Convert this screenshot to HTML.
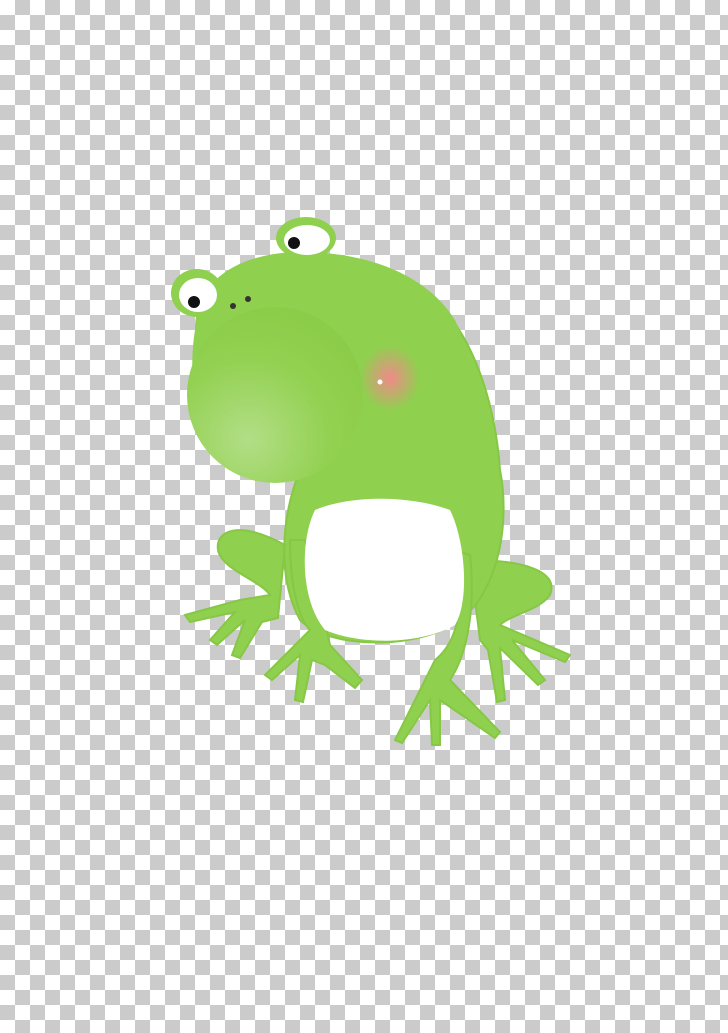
<!DOCTYPE html>
<html><head><style>
html,body{margin:0;padding:0}
body{width:728px;height:1033px;overflow:hidden;
background:conic-gradient(#cbcbcb 25%,#fff 0 50%,#cbcbcb 0 75%,#fff 0);
background-size:30px 30px;}
svg{position:absolute;left:0;top:0}
</style></head><body>
<svg width="728" height="1033" viewBox="0 0 728 1033">
<defs>
<radialGradient id="hg" cx="0.35" cy="0.75" r="0.75"><stop offset="0" stop-color="#b2de86"/><stop offset="0.6" stop-color="#93d152"/><stop offset="1" stop-color="#8bcc48"/></radialGradient>
<radialGradient id="cg" cx="0.5" cy="0.5" r="0.5"><stop offset="0" stop-color="#f08a8a"/><stop offset="1" stop-color="#f08a8a" stop-opacity="0"/></radialGradient>
</defs>
<g fill="#8fd04e" stroke="#86c845" stroke-width="2">
<path d="M285 545 C240 520 215 530 218 550 C222 570 260 580 270 595 L240 600 L185 615 L190 622 L235 612 L210 640 L217 645 L245 620 L232 655 L240 658 L262 622 L278 618 Z"/>
<path d="M470 560 C520 560 560 570 550 595 C540 610 510 615 500 625 L570 655 L565 662 L512 640 L545 680 L538 685 L500 648 L505 700 L497 702 L488 650 L480 640 Z"/>
<path d="M300 470 C280 520 278 580 300 620 C330 650 420 650 460 620 C500 590 510 520 500 470 C495 400 470 320 420 290 L330 300 Z"/>
<path d="M290 540 C290 590 300 620 310 630 L265 675 L272 680 L300 655 L295 700 L303 702 L312 660 L325 665 L355 688 L362 680 L330 645 C320 600 310 560 305 540 Z"/>
<path d="M455 550 C465 600 460 640 435 660 L395 740 L402 743 L430 700 L432 745 L440 745 L440 700 L495 738 L500 732 L450 680 C470 650 475 600 470 555 Z"/>
</g>
<path d="M315 510 C300 540 300 600 325 630 C360 645 420 645 455 625 C470 600 465 540 450 510 C410 495 350 495 315 510 Z" fill="#fff"/>
<path d="M195 330 C195 280 240 250 310 252 C380 255 430 280 455 320 C475 360 470 430 430 470 C380 500 330 490 310 480 C270 485 220 470 200 420 C192 400 190 360 195 330 Z" fill="#8fd04e"/>
<ellipse cx="275" cy="395" rx="88" ry="88" fill="url(#hg)"/>
<ellipse cx="197" cy="293" rx="26" ry="24" fill="#8fd04e"/>
<ellipse cx="198" cy="295" rx="19" ry="17" fill="#fff"/>
<circle cx="194" cy="302" r="6" fill="#111"/>
<ellipse cx="306" cy="238" rx="30" ry="21" fill="#8fd04e"/>
<ellipse cx="307" cy="240" rx="23" ry="15" fill="#fff"/>
<circle cx="294" cy="243" r="6" fill="#111"/>
<circle cx="233" cy="306" r="3" fill="#333"/><circle cx="248" cy="299" r="3" fill="#333"/>
<ellipse cx="390" cy="378" rx="30" ry="33" fill="url(#cg)"/>
<circle cx="380" cy="382" r="2.5" fill="#fff"/>
</svg>
</body></html>
